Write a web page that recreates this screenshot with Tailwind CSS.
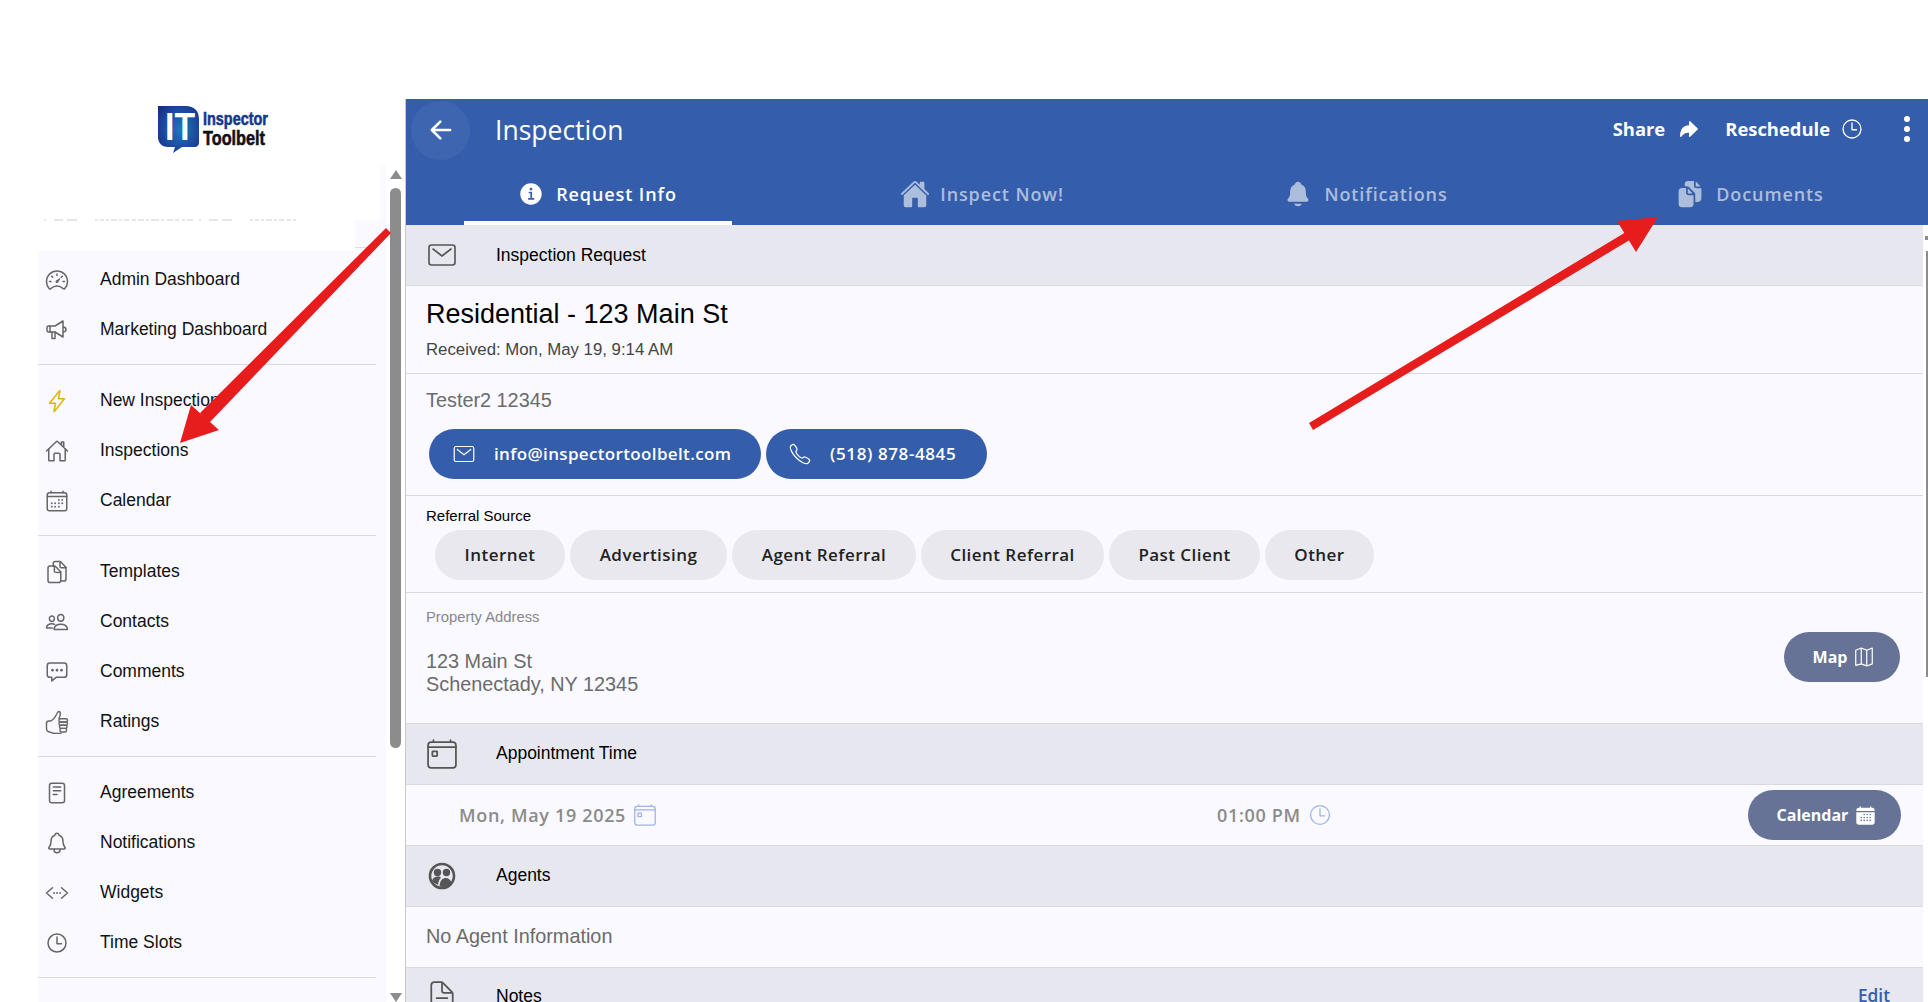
<!DOCTYPE html>
<html lang="en">
<head>
<meta charset="utf-8">
<title>Inspection</title>
<script src="https://cdn.jsdelivr.net/npm/@tailwindcss/browser@4"></script>
</head>
<body class="relative w-[1928px] h-[1002px] overflow-hidden bg-white font-['Liberation_Sans',Arial,sans-serif] text-[#111]">
<div class="h-[99px]"></div>
<div class="flex h-[903px]">
  <!-- sidebar column -->
  <aside class="w-[405px] shrink-0 flex flex-col">
    <div class="h-[66px] flex pl-[158px] pt-[7px]">
      <svg class="w-[116px] h-[50px]" viewBox="0 0 116 50">
        <defs>
          <radialGradient id="lg" cx="0.55" cy="0.5" r="0.7"><stop offset="0" stop-color="#1c78c0"/><stop offset="1" stop-color="#1a2a86"/></radialGradient>
        </defs>
        <path d="M0 0H28C36 0 41 5 41 13V36C41 40 39 41 36 41H24L15 47L17 41H10C4 41 0 37 0 31Z" fill="url(#lg)"/>
        <text x="7" y="34" font-family="Liberation Sans" font-weight="700" font-size="38" fill="#fff" textLength="30" lengthAdjust="spacingAndGlyphs">IT</text>
        <text x="45" y="19" font-family="Liberation Sans" font-weight="700" font-size="18" fill="#14388f" stroke="#14388f" stroke-width="0.6" textLength="65" lengthAdjust="spacingAndGlyphs">Inspector</text>
        <text x="45" y="39" font-family="Liberation Sans" font-weight="700" font-size="21" fill="#111" stroke="#111" stroke-width="0.6" textLength="62" lengthAdjust="spacingAndGlyphs">Toolbelt</text>
      </svg>
    </div>
    <div class="flex flex-1 min-h-0 pl-[38px]">
      <nav class="relative w-[348px] bg-[#f9f9ff] overflow-hidden">
        <div class="absolute left-[-38px] top-0 w-[380px] h-[55px] bg-white"></div>
        <div class="absolute left-0 top-[55px] w-[317px] h-[31px] bg-white"></div>
        <svg class="absolute left-[6px] top-[54px] w-[252px] h-[2px]" viewBox="0 0 252 2"><line x1="0" y1="1" x2="252" y2="1" stroke="#cfcfcf" stroke-width="1" stroke-dasharray="2 8 9 4 10 18 3 2 4 2 3 2 6 2 3 2 5 3 4 2 6 2 3 2 8 2 3 3 6 2 4 3 3 2 6 6"/></svg>
        <div class="absolute left-[317px] top-[82px] w-[21px] h-px bg-[#dcdce2]"></div>
        <div class="h-[89px]"></div>

        <a class="flex items-center h-[50px] pt-[1px] text-[17.5px]"><span class="w-[62px] pl-[7px]"><svg class="w-[24px] h-[24px] text-[#666]" viewBox="0 0 512 512" fill="none" stroke="currentColor" stroke-width="32" stroke-linecap="round" stroke-linejoin="round"><path d="M326.1 231.9l-47.5 75.5a31 31 0 01-7 7 30.11 30.11 0 01-35-49l75.5-47.5a10.23 10.23 0 0111.7 0 10.06 10.06 0 012.3 14z" fill="currentColor" stroke="none"/><path d="M256 64C132.3 64 32 164.2 32 287.9a223.18 223.18 0 0056.3 148.5c1.1 1.2 2.1 2.4 3.2 3.5a25.19 25.19 0 0037.1-.1 173.13 173.13 0 01254.8 0 25.19 25.19 0 0037.1.1l3.2-3.5A223.18 223.18 0 00480 287.9C480 164.2 379.7 64 256 64z"/><path d="M256 128v32M416 288h-32M128 288H96M165.49 197.49l-22.63-22.63M346.51 197.49l22.63-22.63"/></svg></span>Admin Dashboard</a>
        <a class="flex items-center h-[50px] pt-[1px] text-[17.5px]"><span class="w-[62px] pl-[7px]"><svg class="w-[24px] h-[24px] text-[#666]" viewBox="0 0 24 24" fill="none" stroke="currentColor" stroke-width="1.5" stroke-linecap="round" stroke-linejoin="round"><path d="M2 9.5c0-.8.7-1.5 1.5-1.5H10l8-5v16l-8-5H3.5C2.700 14 2 13.300 2 12.500z"/><path d="M18.500 9c1.500.3 2.500 1.300 2.500 2.500S20 13.700 18.500 14"/><path d="M7 14v6.500h3V14M5 8v6"/></svg></span>Marketing Dashboard</a>
        <div class="mt-[10px] mb-[10px] w-[338px] h-px bg-[#d9d9df]"></div>

        <a class="flex items-center h-[50px] pt-[1px] text-[17.5px]"><span class="w-[62px] pl-[7px]"><svg class="w-[24px] h-[24px] text-[#e3b505]" viewBox="0 0 512 512" fill="none" stroke="currentColor" stroke-width="32" stroke-linecap="round" stroke-linejoin="round"><path d="M315.27 33L96 304h128l-31.51 173.23a2.36 2.36 0 002.33 2.77h0a2.36 2.36 0 001.89-.95L416 208H288l31.66-173.25a2.45 2.45 0 00-2.44-2.75h0a2.42 2.42 0 00-1.95 1z"/></svg></span>New Inspection</a>
        <a class="flex items-center h-[50px] pt-[1px] text-[17.5px]"><span class="w-[62px] pl-[7px]"><svg class="w-[24px] h-[24px] text-[#666]" viewBox="0 0 512 512" fill="none" stroke="currentColor" stroke-width="32" stroke-linecap="round" stroke-linejoin="round"><path d="M80 212v236a16 16 0 0016 16h96V328a24 24 0 0124-24h80a24 24 0 0124 24v136h96a16 16 0 0016-16V212"/><path d="M480 256L266.89 52c-5-5.280-16.690-5.340-21.780 0L32 256M400 179V64h-48v69"/></svg></span>Inspections</a>
        <a class="flex items-center h-[50px] pt-[1px] text-[17.5px]"><span class="w-[62px] pl-[7px]"><svg class="w-[24px] h-[24px] text-[#666]" viewBox="0 0 512 512" fill="none" stroke="currentColor" stroke-width="32" stroke-linecap="round" stroke-linejoin="round"><rect x="48" y="80" width="416" height="384" rx="48"/><path d="M128 48v32M384 48v32M48 160h416"/><g fill="currentColor" stroke="none"><circle cx="296" cy="232" r="20"/><circle cx="368" cy="232" r="20"/><circle cx="296" cy="304" r="20"/><circle cx="368" cy="304" r="20"/><circle cx="144" cy="304" r="20"/><circle cx="216" cy="304" r="20"/><circle cx="144" cy="376" r="20"/><circle cx="216" cy="376" r="20"/><circle cx="296" cy="376" r="20"/></g></svg></span>Calendar</a>
        <div class="mt-[10px] mb-[10px] w-[338px] h-px bg-[#d9d9df]"></div>

        <a class="flex items-center h-[50px] pt-[1px] text-[17.5px]"><span class="w-[62px] pl-[7px]"><svg class="w-[24px] h-[24px] text-[#666]" viewBox="0 0 512 512" fill="none" stroke="currentColor" stroke-width="32" stroke-linecap="round" stroke-linejoin="round"><path d="M336 264.130V436c0 24.300-19.050 44-42.950 44H107c-23.950 0-43-19.700-43-44V172a44.260 44.260 0 0144-44h94.120a24.550 24.550 0 0117.490 7.360l109.150 111a25.400 25.400 0 017.240 17.770z"/><path d="M200 128v108a28.340 28.340 0 0028 28h108"/><path d="M176 128V76a44.260 44.260 0 0144-44h94a24.830 24.830 0 0117.610 7.360l109.150 111a25.090 25.090 0 017.240 17.770V404c0 24.300-19.050 44-42.950 44H344"/><path d="M320 32v104a28.340 28.340 0 0028 28h104"/></svg></span>Templates</a>
        <a class="flex items-center h-[50px] pt-[1px] text-[17.5px]"><span class="w-[62px] pl-[7px]"><svg class="w-[24px] h-[24px] text-[#666]" viewBox="0 0 512 512" fill="none" stroke="currentColor" stroke-width="32" stroke-linecap="round" stroke-linejoin="round"><path d="M402 168c-2.930 40.670-33.100 72-66 72s-63.120-31.320-66-72c-3-42.310 26.370-72 66-72s69 30.460 66 72z"/><path d="M336 304c-65.170 0-127.840 32.370-143.540 95.410-2.080 8.340 3.150 16.590 11.720 16.590h263.650c8.570 0 13.770-8.250 11.720-16.590C463.850 335.360 401.180 304 336 304z"/><path d="M200 185.940c-2.340 32.480-26.720 58.060-53 58.060s-50.700-25.570-53-58.060C91.610 152.150 115.340 128 147 128s55.390 24.770 53 57.940z"/><path d="M206 306c-18.050-8.270-37.930-11.450-59-11.450-52 0-102.100 25.850-114.650 76.200-1.650 6.660 2.530 13.250 9.370 13.250H154"/></svg></span>Contacts</a>
        <a class="flex items-center h-[50px] pt-[1px] text-[17.5px]"><span class="w-[62px] pl-[7px]"><svg class="w-[24px] h-[24px] text-[#666]" viewBox="0 0 512 512" fill="none" stroke="currentColor" stroke-width="32" stroke-linecap="round" stroke-linejoin="round"><path d="M408 64H104a56.160 56.160 0 00-56 56v192a56.160 56.160 0 0056 56h40v80l93.720-78.140a8 8 0 015.130-1.860H408a56.160 56.160 0 0056-56V120a56.160 56.160 0 00-56-56z"/><g fill="currentColor" stroke="none"><circle cx="160" cy="216" r="28"/><circle cx="256" cy="216" r="28"/><circle cx="352" cy="216" r="28"/></g></svg></span>Comments</a>
        <a class="flex items-center h-[50px] pt-[1px] text-[17.5px]"><span class="w-[62px] pl-[7px]"><svg class="w-[24px] h-[24px] text-[#666]" viewBox="0 0 24 24" fill="none" stroke="currentColor" stroke-width="1.400" stroke-linecap="round" stroke-linejoin="round"><path d="M1.500 13.300C1.500 12 2.500 11 3.800 11H6c2.500-1.500 4.500-4 5.800-7 .5-1.300.8-2.500 2-2.500 1.300 0 1.700 1.300 1.500 2.700-.2 1.300-.7 3-1.300 4.600"/><path d="M1.500 13.300v5C1.500 20.500 3 22 5 22c1.500 1 4 1.500 6.500 1.500H16"/><rect x="14" y="8.800" width="8.500" height="3.200" rx="1.500"/><rect x="14" y="12" width="8.500" height="3.200" rx="1.500"/><rect x="14.500" y="15.200" width="7.500" height="3.200" rx="1.500"/><rect x="15" y="18.400" width="6.500" height="3.600" rx="1.500"/></svg></span>Ratings</a>
        <div class="mt-[10px] mb-[10px] w-[338px] h-px bg-[#d9d9df]"></div>

        <a class="flex items-center h-[50px] pt-[1px] text-[17.5px]"><span class="w-[62px] pl-[7px]"><svg class="w-[24px] h-[24px] text-[#666]" viewBox="0 0 512 512" fill="none" stroke="currentColor" stroke-width="32" stroke-linecap="round" stroke-linejoin="round"><rect x="96" y="48" width="320" height="416" rx="48"/><path d="M176 128h160M176 208h160M176 288h80"/></svg></span>Agreements</a>
        <a class="flex items-center h-[50px] pt-[1px] text-[17.5px]"><span class="w-[62px] pl-[7px]"><svg class="w-[24px] h-[24px] text-[#666]" viewBox="0 0 512 512" fill="none" stroke="currentColor" stroke-width="32" stroke-linecap="round" stroke-linejoin="round"><path d="M427.680 351.430C402 320 383.870 304 383.870 217.350 383.870 138 343.350 109.730 310 96c-4.430-1.820-8.600-6-9.950-10.550C294.200 65.540 277.800 48 256 48s-38.210 17.550-44 37.470c-1.350 4.600-5.520 8.710-9.950 10.530-33.390 13.750-73.870 41.920-73.870 121.350C128.130 304 110 320 84.320 351.430 73.680 364.450 83 384 101.610 384h308.880c18.510 0 27.770-19.610 17.190-32.570zM320 384v16a64 64 0 01-128 0v-16"/></svg></span>Notifications</a>
        <a class="flex items-center h-[50px] pt-[1px] text-[17.5px]"><span class="w-[62px] pl-[7px]"><svg class="w-[24px] h-[24px] text-[#666]" viewBox="0 0 512 512" fill="none" stroke="currentColor" stroke-width="32" stroke-linecap="round" stroke-linejoin="round"><path d="M160 368L32 256l128-112M352 368l128-112-128-112"/><g fill="currentColor" stroke="none"><circle cx="192" cy="256" r="20"/><circle cx="256" cy="256" r="20"/><circle cx="320" cy="256" r="20"/></g></svg></span>Widgets</a>
        <a class="flex items-center h-[50px] pt-[1px] text-[17.5px]"><span class="w-[62px] pl-[7px]"><svg class="w-[24px] h-[24px] text-[#666]" viewBox="0 0 512 512" fill="none" stroke="currentColor" stroke-width="32" stroke-linecap="round" stroke-linejoin="round"><path d="M256 64C150 64 64 150 64 256s86 192 192 192 192-86 192-192S362 64 256 64z"/><path d="M256 128v144h96"/></svg></span>Time Slots</a>
        <div class="mt-[10px] w-[338px] h-px bg-[#d9d9df]"></div>
      </nav>
      <!-- sidebar scrollbar -->
      <div class="ml-[4px] w-[11px] flex flex-col items-center">
        <div class="mt-[5px] w-0 h-0 border-x-[6px] border-x-transparent border-b-[9px] border-b-[#8c8c8c]"></div>
        <div class="mt-[9px] w-[11px] h-[560px] bg-[#8c8c8c] rounded-full"></div>
        <div class="mt-auto w-0 h-0 border-x-[6px] border-x-transparent border-t-[9px] border-t-[#8c8c8c]"></div>
      </div>
    </div>
  </aside>

  <!-- main -->
  <main class="w-[1523px] shrink-0 border-l border-l-[#c9c9c9] font-['Open_Sans',sans-serif] flex flex-col">
    <header class="bg-[#345dab] text-white h-[126px] shrink-0 flex flex-col">
      <div class="h-[62px] flex items-center pl-[5px] pr-[9px]">
        <span class="w-[59px] h-[59px] rounded-full bg-white/5 flex items-center justify-center">
          <svg class="w-[30px] h-[30px]" viewBox="0 0 512 512" fill="none" stroke="currentColor" stroke-width="44" stroke-linecap="round" stroke-linejoin="round"><path d="M244 400L100 256l144-144M120 256h292"/></svg>
        </span>
        <h1 class="ml-[25px] text-[26.5px] leading-none">Inspection</h1>
        <div class="ml-auto flex items-center pb-[2px]">
          <span class="text-[18.4px] font-bold">Share</span>
          <svg class="ml-[13px] w-[22px] h-[22px]" viewBox="0 0 512 512" fill="currentColor"><path d="M58.790 439.130A16 16 0 0148 424c0-73.100 14.680-131.560 43.650-173.770 35-51 90.210-78.460 164.350-81.870V88a16 16 0 0127.050-11.570l176 168a16 16 0 010 23.140l-176 168A16 16 0 01256 424v-79.820c-45 1.360-79 8.650-106.070 22.640-29.250 15.120-50.460 37.710-73.320 67a16 16 0 01-17.820 5.310z"/></svg>
          <span class="ml-[25px] text-[18.4px] font-bold">Reschedule</span>
          <svg class="ml-[10px] w-[24px] h-[24px]" viewBox="0 0 512 512" fill="none" stroke="currentColor" stroke-width="28" stroke-linecap="round" stroke-linejoin="round"><path d="M256 64C150 64 64 150 64 256s86 192 192 192 192-86 192-192S362 64 256 64z"/><path d="M256 128v144h96"/></svg>
          <svg class="ml-[31px] w-[24px] h-[30px]" viewBox="0 0 24 30" fill="currentColor"><circle cx="12" cy="5" r="3"/><circle cx="12" cy="15" r="3"/><circle cx="12" cy="25" r="3"/></svg>
        </div>
      </div>
      <div class="grid grid-cols-[repeat(4,384px)] h-[64px] overflow-hidden text-[18px] font-semibold tracking-[0.9px]">
        <div class="relative flex items-center justify-center gap-[13px] text-white pt-[2px]">
          <svg class="w-[24px] h-[24px]" viewBox="32 32 448 448" fill="currentColor"><path d="M256 56C145.720 56 56 145.720 56 256s89.720 200 200 200 200-89.720 200-200S366.280 56 256 56zm0 82a26 26 0 11-26 26 26 26 0 0126-26zm48 226h-88a16 16 0 010-32h28v-88h-16a16 16 0 010-32h32a16 16 0 0116 16v104h28a16 16 0 010 32z"/></svg>
          <span>Request Info</span>
          <span class="absolute bottom-0 left-[58px] w-[268px] h-[4px] bg-white"></span>
        </div>
        <div class="flex items-center justify-center gap-[10px] text-white/60 pt-[2px]">
          <svg class="w-[30px] h-[30px]" viewBox="0 0 512 512" fill="currentColor"><path d="M261.560 101.280a8 8 0 00-11.060 0L66.400 277.150a8 8 0 00-2.470 5.790L63.900 448a32 32 0 0032 32H192a16 16 0 0016-16V328a8 8 0 018-8h80a8 8 0 018 8v136a16 16 0 0016 16h96.060a32 32 0 0032-32V282.940a8 8 0 00-2.470-5.790z"/><path d="M490.910 244.150l-74.800-71.560V64a16 16 0 00-16-16h-48a16 16 0 00-16 16v32l-57.920-55.380C272.770 35.140 264.710 32 256 32c-8.680 0-16.720 3.140-22.140 8.630l-212.700 203.500c-6.220 6-7 15.870-1.340 22.370A16 16 0 0043 267.560L250.500 69.280a8 8 0 0111.060 0l207.520 198.280a16 16 0 0022.590-.44c6.140-6.360 5.630-16.860-.76-22.970z"/></svg>
          <span>Inspect Now!</span>
        </div>
        <div class="flex items-center justify-center gap-[12px] text-white/60 pt-[2px]">
          <svg class="w-[28px] h-[28px]" viewBox="0 0 512 512" fill="currentColor"><path d="M440.080 341.310c-1.660-2-3.290-4-4.890-5.930-22-26.610-35.310-42.670-35.310-118 0-39-9.330-71-27.720-95-13.560-17.730-31.890-31.180-56.050-41.120a3 3 0 01-.82-.67C306.600 51.490 282.820 32 256 32s-50.590 19.490-59.280 48.560a3.130 3.130 0 01-.81.65c-56.380 23.210-83.780 67.740-83.780 136.140 0 75.360-13.290 91.420-35.310 118-1.600 1.930-3.230 3.890-4.890 5.930a35.160 35.160 0 00-4.650 37.620c6.170 13 19.320 21.070 34.330 21.070H410.500c14.940 0 28-8.060 34.190-21a35.170 35.170 0 00-4.610-37.660zM256 480a80.060 80.060 0 0070.440-42.130 4 4 0 00-3.540-5.870H189.120a4 4 0 00-3.550 5.870A80.060 80.060 0 00256 480z"/></svg>
          <span>Notifications</span>
        </div>
        <div class="flex items-center justify-center gap-[12px] text-white/60 pt-[2px]">
          <svg class="w-[28px] h-[28px]" viewBox="0 0 512 512" fill="currentColor"><path d="M298.390 248a4 4 0 002.860-6.800l-78.400-79.720a4 4 0 00-6.850 2.810V236a12 12 0 0012 12z"/><path d="M197 267a43.670 43.670 0 01-13-31v-92h-72a64.190 64.190 0 00-64 64v224a64 64 0 0064 64h144a64 64 0 0064-64V280h-92a43.610 43.610 0 01-31-13zM372 120h70.390a4 4 0 002.860-6.800l-78.400-79.720a4 4 0 00-6.850 2.810V108a12 12 0 0012 12z"/><path d="M372 152a44.340 44.340 0 01-44-44V16H220a60.070 60.070 0 00-60 60v36h42.120A40.810 40.810 0 01231 124.140l109.160 111a41.110 41.110 0 0111.830 29V400h53.050c32.510 0 58.950-26.920 58.950-60V152z"/></svg>
          <span>Documents</span>
        </div>
      </div>
    </header>

    <div class="flex flex-1 min-h-0">
      <section class="w-[1517px] shrink-0 bg-[#f9f9ff] overflow-hidden">
        <div class="h-[61px] border-b border-b-[#d9d9df] bg-[#e7e7f0] flex items-center font-['Liberation_Sans',sans-serif] text-[17.5px] text-black">
          <span class="w-[90px] pl-[20px]"><svg class="w-[32px] h-[32px] text-[#555]" viewBox="0 0 512 512" fill="none" stroke="currentColor" stroke-width="26" stroke-linecap="round" stroke-linejoin="round"><rect x="48" y="96" width="416" height="320" rx="40"/><path d="M112 160l144 112 144-112"/></svg></span><span>Inspection Request</span>
        </div>
        <div class="h-[88px] border-b border-b-[#d9d9df] pl-[20px] pt-[10px] font-['Liberation_Sans',sans-serif]">
          <div class="text-[27px] leading-[36px] text-black">Residential - 123 Main St</div>
          <div class="mt-[8px] text-[16.8px] leading-[20px] text-[#444]">Received: Mon, May 19, 9:14 AM</div>
        </div>
        <div class="h-[122px] border-b border-b-[#d9d9df] pl-[20px] pt-[15px]">
          <div class="font-['Liberation_Sans',sans-serif] text-[19.85px] leading-[23px] text-[#6b6b6b]">Tester2 12345</div>
          <div class="mt-[17px] flex gap-[5px] pl-[3px]">
            <a class="h-[50px] w-[332px] rounded-full bg-[#345dab] text-white flex items-center pl-[23px] text-[17px] font-semibold tracking-[0.35px]">
              <svg class="w-[24px] h-[24px] mr-[18px]" viewBox="0 0 512 512" fill="none" stroke="currentColor" stroke-width="26" stroke-linecap="round" stroke-linejoin="round"><rect x="48" y="96" width="416" height="320" rx="40"/><path d="M112 160l144 112 144-112"/></svg>
              info@inspectortoolbelt.com
            </a>
            <a class="h-[50px] w-[221px] rounded-full bg-[#345dab] text-white flex items-center pl-[22px] text-[17px] font-semibold tracking-[0.6px]">
              <svg class="w-[24px] h-[24px] mr-[18px]" viewBox="0 0 512 512" fill="none" stroke="currentColor" stroke-width="26" stroke-miterlimit="10"><path d="M451 374c-15.880-16-54.340-39.350-73-48.760-24.300-12.240-26.300-13.240-45.400.95-12.740 9.470-21.210 17.930-36.120 14.750s-47.310-21.110-75.680-49.390-47.340-61.620-50.530-76.480 5.410-23.230 14.790-36c13.220-18 12.220-21 .92-45.300-8.810-18.900-32.840-57-48.900-72.800C119.900 44 119.900 47 108.830 51.600A160.150 160.150 0 0083 65.370C67 76 58.120 84.830 51.910 98.100s-9 44.380 23.070 102.640 54.570 88.050 101.140 134.490S258.500 406.640 310.850 436c64.760 36.270 89.600 29.200 102.910 23s22.180-15 32.830-31a159.090 159.090 0 0013.800-25.800C465 391.170 468 391.170 451 374z"/></svg>
              (518) 878-4845
            </a>
          </div>
        </div>
        <div class="h-[97px] border-b border-b-[#d9d9df] pl-[20px] pt-[11px]">
          <div class="font-['Liberation_Sans',sans-serif] text-[15px] leading-[18px] text-black">Referral Source</div>
          <div class="mt-[5px] flex gap-[5px] pl-[9px] text-[17px] font-semibold tracking-[0.45px] text-[#222]">
            <span class="h-[50px] w-[130px] rounded-full bg-[#e8e8ee] flex items-center justify-center">Internet</span>
            <span class="h-[50px] w-[157px] rounded-full bg-[#e8e8ee] flex items-center justify-center">Advertising</span>
            <span class="h-[50px] w-[184px] rounded-full bg-[#e8e8ee] flex items-center justify-center">Agent Referral</span>
            <span class="h-[50px] w-[183px] rounded-full bg-[#e8e8ee] flex items-center justify-center">Client Referral</span>
            <span class="h-[50px] w-[151px] rounded-full bg-[#e8e8ee] flex items-center justify-center">Past Client</span>
            <span class="h-[50px] w-[109px] rounded-full bg-[#e8e8ee] flex items-center justify-center">Other</span>
          </div>
        </div>
        <div class="h-[131px] border-b border-b-[#d9d9df] pl-[20px] pr-[23px] flex justify-between">
          <div class="font-['Liberation_Sans',sans-serif] pt-[15px]">
            <div class="text-[14.8px] leading-[18px] text-[#888]">Property Address</div>
            <div class="mt-[24px] text-[19.85px] leading-[23px] text-[#6b6b6b]">123 Main St<br>Schenectady, NY 12345</div>
          </div>
          <a class="mt-[39px] h-[50px] w-[116px] rounded-full bg-[#667396] text-white flex items-center justify-center gap-[6px] pl-[4px] text-[16px] font-bold">
            Map
            <svg class="w-[22px] h-[22px]" viewBox="0 0 512 512" fill="none" stroke="currentColor" stroke-width="28" stroke-linejoin="round"><path d="M321.690 98.830L192 48 64 98.830v352L192 416l129.690 48L448 416V48zM192 48v368M320 96v368"/></svg>
          </a>
        </div>
        <div class="h-[61px] border-b border-b-[#d9d9df] bg-[#e7e7f0] flex items-center font-['Liberation_Sans',sans-serif] text-[17.5px] text-black">
          <span class="w-[90px] pl-[21px]"><svg class="w-[30px] h-[30px] text-[#555]" viewBox="32 32 448 448" fill="none" stroke="currentColor" stroke-width="26" stroke-linejoin="round" stroke-linecap="round"><rect x="48" y="80" width="416" height="384" rx="48"/><path d="M128 48v32M384 48v32M48 152h416"/><rect x="112" y="216" width="72" height="72" rx="8"/></svg></span><span class="pb-[2px]">Appointment Time</span>
        </div>
        <div class="h-[61px] border-b border-b-[#d9d9df] relative flex items-center pl-[53px] pr-[22px] text-[18px] font-semibold text-[#8b8b8b] tracking-[0.67px]">
          <span>Mon, May 19 2025</span>
          <svg class="ml-[8px] w-[22px] h-[22px] text-[#9db5e6]" viewBox="32 32 448 448" fill="none" stroke="currentColor" stroke-width="26" stroke-linejoin="round" stroke-linecap="round"><rect x="48" y="80" width="416" height="384" rx="48"/><path d="M128 48v32M384 48v32M48 152h416"/><rect x="112" y="216" width="72" height="72" rx="8"/></svg>
          <span class="absolute left-[811px]">01:00 PM</span>
          <svg class="absolute left-[903px] w-[22px] h-[22px] text-[#9db5e6]" viewBox="32 32 448 448" fill="none" stroke="currentColor" stroke-width="26" stroke-linecap="round" stroke-linejoin="round"><path d="M256 64C150 64 64 150 64 256s86 192 192 192 192-86 192-192S362 64 256 64z"/><path d="M256 128v144h96"/></svg>
          <a class="ml-auto h-[50px] w-[153px] rounded-full bg-[#667396] text-white flex items-center justify-center gap-[7px] pl-[4px] text-[16px] font-bold tracking-normal">
            Calendar
            <svg class="w-[21px] h-[21px]" viewBox="0 0 512 512"><path fill="currentColor" d="M480 128a64 64 0 00-64-64h-16V48.450c0-8.610-6.620-16-15.230-16.430A16 16 0 00368 48v16H144V48.450c0-8.610-6.620-16-15.230-16.430A16 16 0 00112 48v16H96a64 64 0 00-64 64v12a4 4 0 004 4h440a4 4 0 004-4zM32 416a64 64 0 0064 64h320a64 64 0 0064-64V179a3 3 0 00-3-3H35a3 3 0 00-3 3z"/><g fill="#667396"><circle cx="296" cy="232" r="20"/><circle cx="368" cy="232" r="20"/><circle cx="224" cy="232" r="20"/><circle cx="152" cy="304" r="20"/><circle cx="224" cy="304" r="20"/><circle cx="296" cy="304" r="20"/><circle cx="368" cy="304" r="20"/><circle cx="152" cy="376" r="20"/><circle cx="224" cy="376" r="20"/><circle cx="296" cy="376" r="20"/><circle cx="368" cy="376" r="20"/></g></svg>
          </a>
        </div>
        <div class="h-[61px] border-b border-b-[#d9d9df] bg-[#e7e7f0] flex items-center font-['Liberation_Sans',sans-serif] text-[17.5px] text-black">
          <span class="w-[90px] pl-[21px]"><svg class="w-[30px] h-[30px] text-[#555]" viewBox="0 0 30 30" fill="currentColor"><circle cx="15" cy="15" r="12" fill="none" stroke="currentColor" stroke-width="2.600"/><circle cx="10.500" cy="11.500" r="3.700"/><circle cx="19.500" cy="11.500" r="3.700"/><path d="M5 20c.5-3 3-4.500 6-4.500 1.500 0 2.500.5 3 1.200-1.500 1.200-2.500 3-3 7-2.500-.7-4.800-2-6-3.700z"/><path d="M12.500 25.500c.3-5 2.500-8.500 6-8.500 3 0 5 2 6 4.800-2.200 2.500-5.500 4.200-8.500 4.200-1.200 0-2.500-.2-3.500-.5z"/></svg></span><span class="pb-[2px]">Agents</span>
        </div>
        <div class="h-[61px] border-b border-b-[#d9d9df] flex items-center pl-[20px] font-['Liberation_Sans',sans-serif] text-[19.85px] text-[#6b6b6b]">No Agent Information</div>
        <div class="h-[61px] bg-[#e7e7f0] flex items-center pr-[33px] font-['Liberation_Sans',sans-serif] text-[17.5px] text-black pb-[5px]">
          <span class="w-[90px] pl-[21px]"><svg class="w-[30px] h-[30px] text-[#555]" viewBox="32 32 448 448" fill="none" stroke="currentColor" stroke-width="26" stroke-linejoin="round" stroke-linecap="round"><path d="M416 221.250V416a48 48 0 01-48 48H144a48 48 0 01-48-48V96a48 48 0 0148-48h98.750a32 32 0 0122.620 9.370l141.260 141.260a32 32 0 019.370 22.620z"/><path d="M256 56v120a32 32 0 0032 32h120M176 288h160M176 368h160"/></svg></span>Notes
          <a class="ml-auto font-['Open_Sans',sans-serif] font-semibold text-[17.3px] text-[#345dab]">Edit</a>
        </div>
      </section>
      <div class="relative flex-1">
        <div class="absolute left-[2px] top-[11px] w-[3px] h-[4px] bg-[#8c8c8c]"></div>
        <div class="absolute left-[3px] top-[26px] w-[2px] h-[426px] bg-[#8c8c8c]"></div>
      </div>
    </div>
  </main>
</div>

<!-- annotation arrows -->
<svg class="absolute inset-0 w-[1928px] h-[1002px] pointer-events-none" viewBox="0 0 1928 1002">
  <g fill="#e71c1c" stroke="none">
    <polygon points="386,228 391,233 209,423 200,413"/>
    <polygon points="180,443 219,430 191,405"/>
    <polygon points="1309,423 1313,430 1633,238 1626,232"/>
    <polygon points="1658,217 1617,221 1636,252"/>
  </g>
</svg>
</body>
</html>
